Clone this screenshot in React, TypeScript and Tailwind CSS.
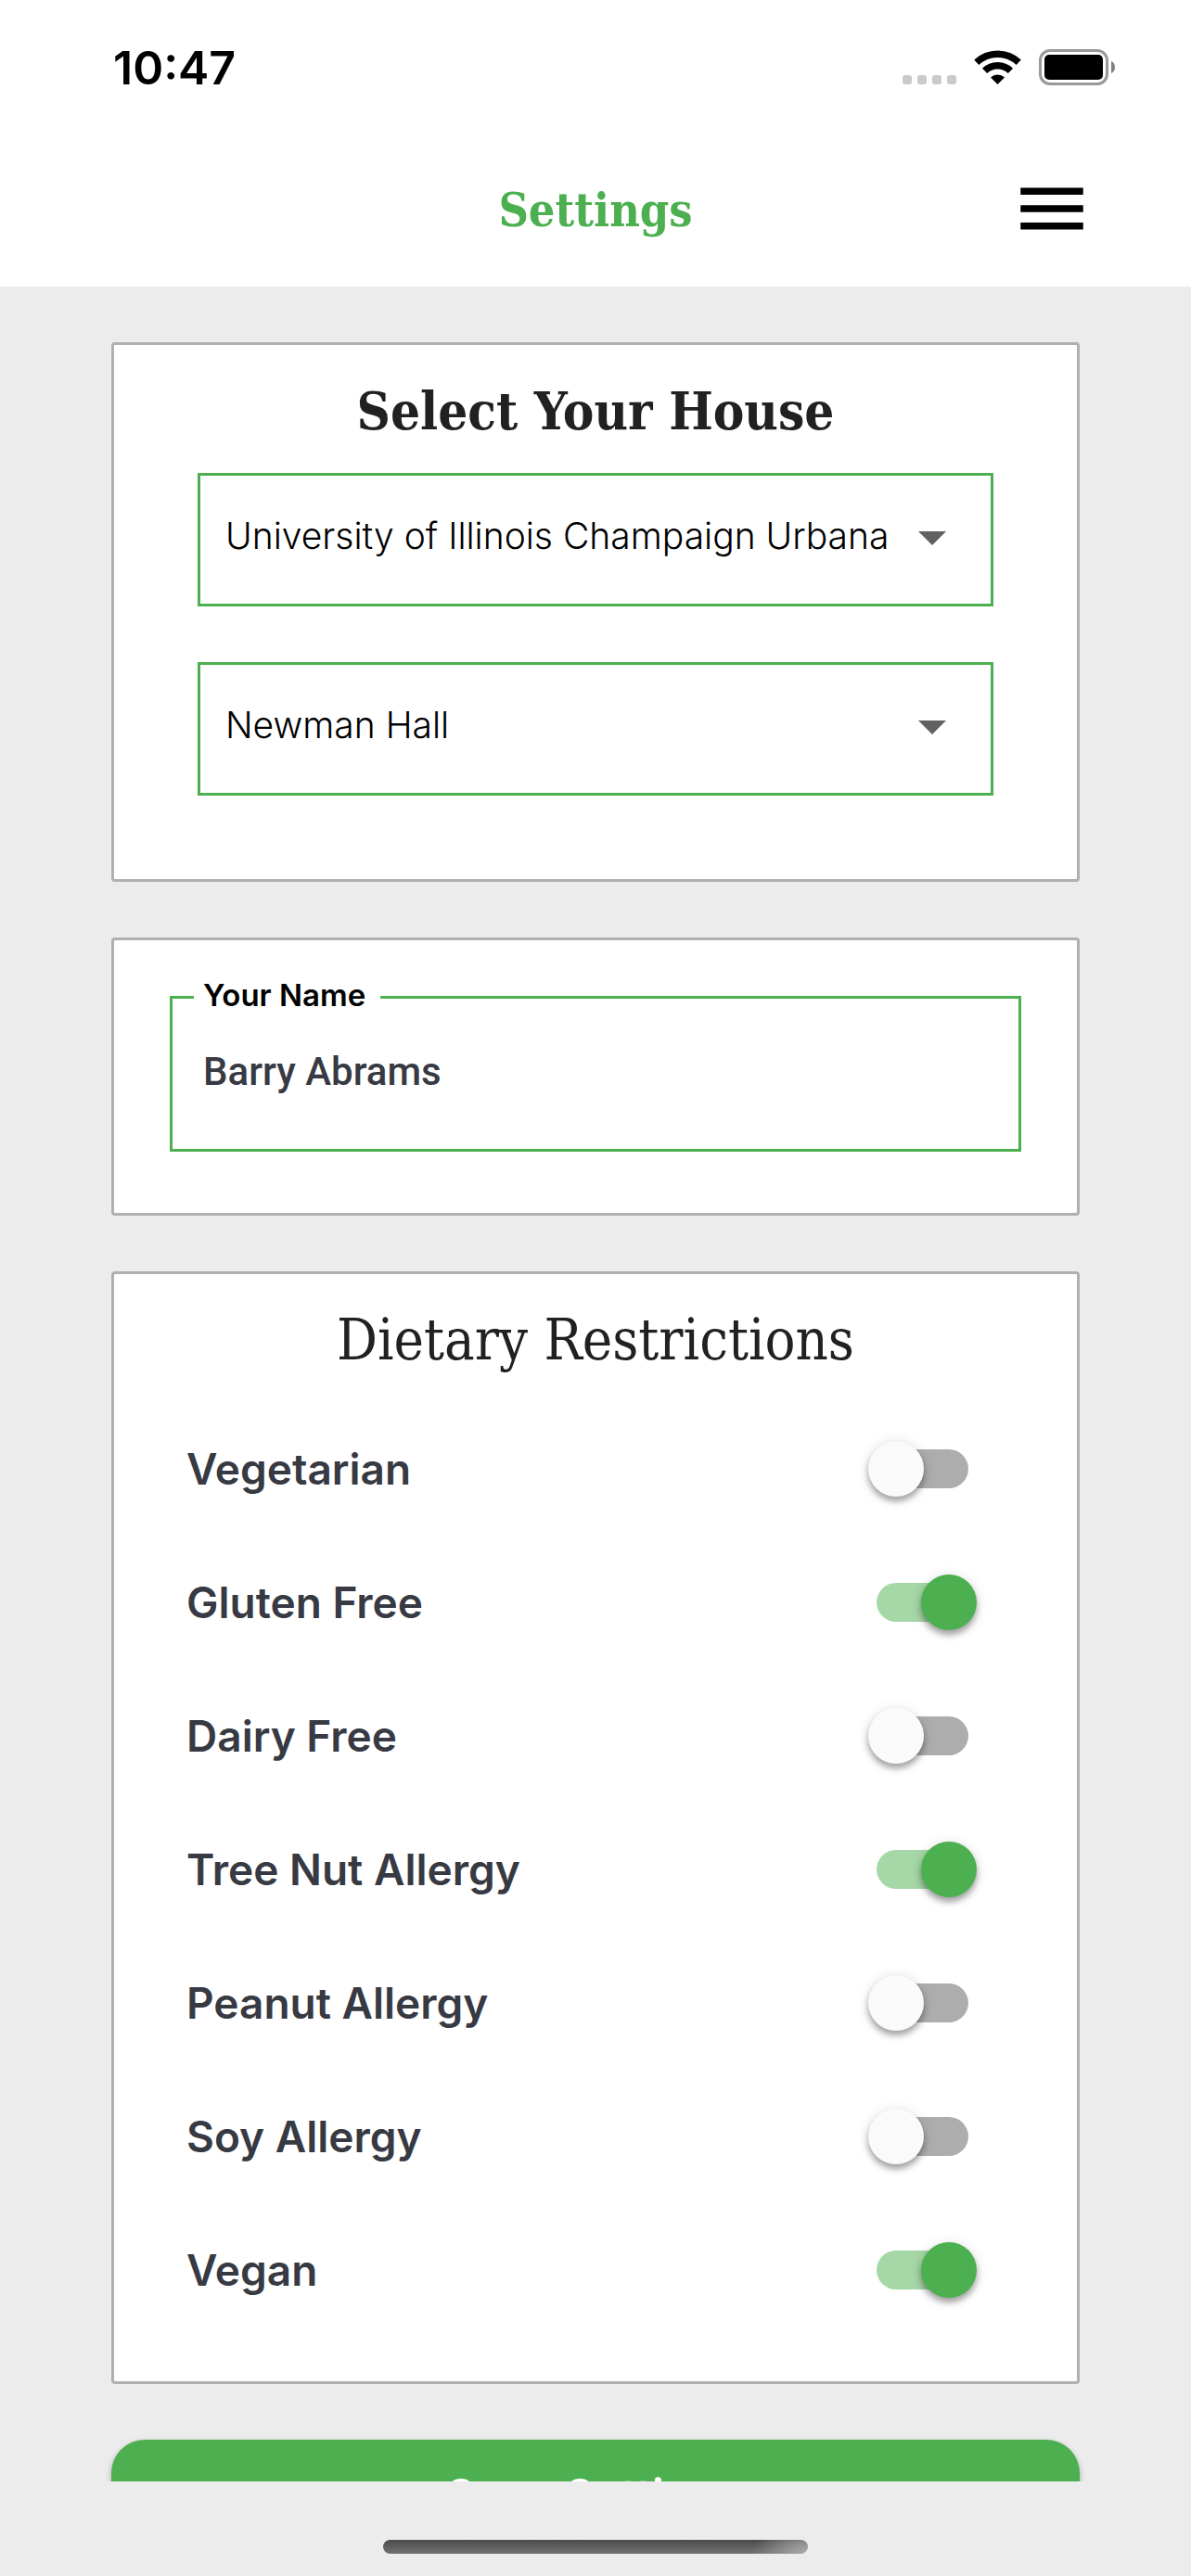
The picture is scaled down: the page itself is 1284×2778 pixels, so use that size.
import { useState, type ReactNode } from "react";

const restrictions = [
  { id: "vegetarian", label: "Vegetarian", on: false },
  { id: "gluten-free", label: "Gluten Free", on: true },
  { id: "dairy-free", label: "Dairy Free", on: false },
  { id: "tree-nut", label: "Tree Nut Allergy", on: true },
  { id: "peanut", label: "Peanut Allergy", on: false },
  { id: "soy", label: "Soy Allergy", on: false },
  { id: "vegan", label: "Vegan", on: true },
];

function StatusBar() {
  return (
    <div className="flex h-[141px] items-start justify-between pl-[122px] pr-[82px] pt-[43px]">
      <span className="text-[50px] font-semibold leading-[60px] text-black">10:47</span>
      <div className="flex items-center pt-[10px]">
        <svg className="mr-[19px] h-[39px] w-[58px]" viewBox="0 0 58 39" fill="#cacaca">
          <rect x="0" y="28" width="10" height="10" rx="3" />
          <rect x="16" y="28" width="10" height="10" rx="3" />
          <rect x="32" y="28" width="10" height="10" rx="3" />
          <rect x="48" y="28" width="10" height="10" rx="3" />
        </svg>
        <svg className="mr-[19px] h-[39px] w-[51px]" viewBox="0 0 51 39" fill="none" stroke="#000" strokeWidth="7.5">
          <path d="M2.8 14.2A33 33 0 0 1 48.2 14.2" />
          <path d="M11.6 23.4A20 20 0 0 1 39.4 23.4" />
          <path d="M18 30.4A11 11 0 0 1 33 30.4L25.500 38Z" fill="#000" stroke="none" />
        </svg>
        <svg className="h-[39px] w-[82px]" viewBox="0 0 82 39">
          <rect x="1.500" y="1.500" width="72" height="36" rx="10.500" fill="none" stroke="#999" strokeWidth="3" />
          <rect x="6" y="6" width="63" height="27" rx="5" fill="#000" />
          <path d="M78 13c5.300 2 5.300 11 0 13Z" fill="#808080" />
        </svg>
      </div>
    </div>
  );
}

function Card({ children }: { children: ReactNode }) {
  return <section className="shrink-0 rounded-[4px] border-[3px] border-[#b0b0b0] bg-white">{children}</section>;
}

function Dropdown({ label, options }: { label: string; options: string[] }) {
  return (
    <div className="relative">
      <select
        aria-label={label}
        className="h-36 w-full appearance-none border-[3px] border-[#4caf50] bg-white pb-2 pl-[27px] pr-24 text-[39px] font-light text-black outline-none"
      >
        {options.map((option) => (
          <option key={option}>{option}</option>
        ))}
      </select>
      <svg className="pointer-events-none absolute right-[30px] top-[33px] size-[72px]" viewBox="0 0 24 24" fill="#616161">
        <path d="M7 10l5 5 5-5z" />
      </svg>
    </div>
  );
}

export default function App() {
  const [name, setName] = useState("Barry Abrams");
  const [items, setItems] = useState(restrictions);

  const toggle = (id: string) =>
    setItems(items.map((item) => (item.id === id ? { ...item, on: !item.on } : item)));

  return (
    <div className="flex h-screen flex-col bg-[#ececec] font-['Inter',sans-serif]">
      {/* Header */}
      <header className="shrink-0 bg-white">
        <StatusBar />
        <div className="grid h-[168px] grid-cols-[1fr_auto_1fr] items-center px-[105px]">
          <h1 className="col-start-2 pt-1 font-['DejaVu_Serif_Condensed','DejaVu_Serif',serif] text-[50px] font-bold leading-[60px] text-[#4caf50]">
            Settings
          </h1>
          <button type="button" aria-label="Open menu" className="justify-self-end">
            <svg className="size-[90px]" viewBox="0 0 24 24" fill="#000">
              <path d="M3 18h18v-2H3v2zm0-5h18v-2H3v2zm0-7v2h18V6H3z" />
            </svg>
          </button>
        </div>
      </header>

      <main className="flex min-h-0 flex-1 flex-col gap-[60px] overflow-y-auto px-[120px] py-[60px] [scrollbar-width:none]">
        {/* House */}
        <Card>
          <h2 className="pb-7 pt-8 text-center font-['DejaVu_Serif_Condensed','DejaVu_Serif',serif] text-[56px] font-bold leading-[78px] text-[#212121]">
            Select Your House
          </h2>
          <div className="flex flex-col gap-[60px] px-[90px] pb-[90px]">
            <Dropdown label="University" options={["University of Illinois Champaign Urbana"]} />
            <Dropdown label="House" options={["Newman Hall"]} />
          </div>
        </Card>

        {/* Name */}
        <Card>
          <div className="px-[60px] pb-[66px] pt-[43px]">
            <fieldset className="border-[3px] border-[#4caf50]">
              <legend className="ml-[23px] pb-1 pl-[10px] pr-4 text-[33px] font-semibold leading-[32px] text-black">
                <label htmlFor="name">Your Name</label>
              </legend>
              <input
                id="name"
                type="text"
                value={name}
                onChange={(e) => setName(e.target.value)}
                className="block h-[146px] w-full px-[33px] pb-[22px] font-['Roboto',sans-serif] text-[42px] font-medium text-[#373a43] outline-none"
              />
            </fieldset>
          </div>
        </Card>

        {/* Dietary restrictions */}
        <Card>
          <h2 className="pb-7 pt-8 text-center font-['DejaVu_Serif_Condensed','DejaVu_Serif',serif] text-[61px] leading-[78px] text-[#212121]">
            Dietary Restrictions
          </h2>
          <div className="pb-12 pl-[78px] pr-[117px]">
            {items.map((item) => (
              <label key={item.id} className="flex h-36 items-center justify-between text-[46px] font-semibold text-[#373a43]">
                {item.label}
                <input
                  type="checkbox"
                  role="switch"
                  checked={item.on}
                  onChange={() => toggle(item.id)}
                  className="relative h-[42px] w-[99px] shrink-0 appearance-none rounded-full bg-[#adadad] before:absolute before:-left-[9px] before:-top-[9px] before:size-[60px] before:rounded-full before:bg-[#fafafa] before:shadow-[0_5px_6px_rgba(0,0,0,0.3),0_2px_14px_rgba(0,0,0,0.14)] checked:bg-[#a5d7a7] checked:before:left-12 checked:before:bg-[#4caf50]"
                />
              </label>
            ))}
          </div>
        </Card>

        <button
          type="button"
          className="h-[121px] shrink-0 rounded-[36px] bg-[#4caf50] text-[49px] font-semibold text-white shadow-[0_3px_6px_rgba(0,0,0,0.3)]"
        >
          Save Settings
        </button>
      </main>

      {/* Home indicator */}
      <footer className="flex h-[102px] shrink-0 justify-center pt-[63px]">
        <div className="h-[15px] w-[458px] rounded-full bg-[radial-gradient(ellipse_60px_36px_at_bottom_right,#ababab,transparent),linear-gradient(#4a4a4a,#727272)]" />
      </footer>
    </div>
  );
}
